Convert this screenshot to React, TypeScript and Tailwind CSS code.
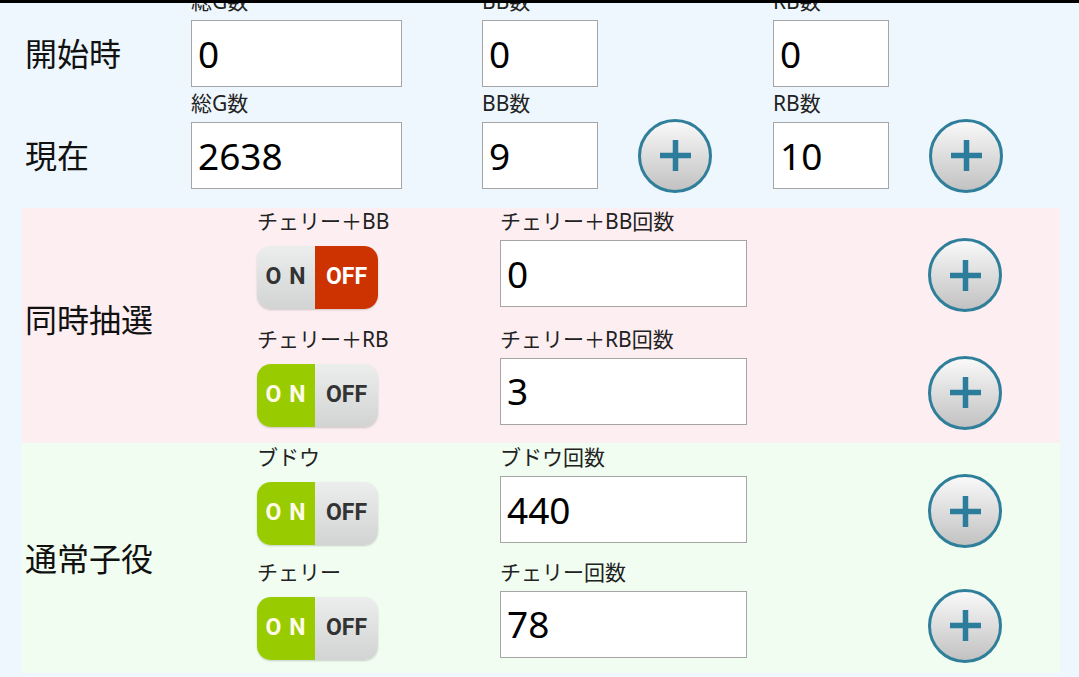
import React from "react";

const font = "font-['Noto_Sans','Noto_Sans_CJK_JP',sans-serif]";

function PlusButton() {
  return (
    <button className="w-[74px] h-[74px] shrink-0 rounded-full border-[3px] border-[#2f7f9b] bg-linear-to-b from-[#f9f9f9] to-[#c2c2c2] flex items-center justify-center">
      <svg width="31" height="31" viewBox="0 0 31 31">
        <path d="M15.5 0v31M0 15.5h31" stroke="#2b7d9b" strokeWidth="5.5" />
      </svg>
    </button>
  );
}

function NumBox({ value, width }: { value: string; width: string }) {
  return (
    <div
      className={`${width} h-[67px] shrink-0 border border-[#a5a5a5] bg-white flex items-center pl-[6px] text-[37px] text-black`}
    >
      {value}
    </div>
  );
}

function TopField({
  label,
  value,
  width,
  plus,
}: {
  label: string;
  value: string;
  width: string;
  plus?: boolean;
}) {
  return (
    <div className="w-[291px] flex flex-col">
      <div className="h-[35px] leading-[32px] text-[21px] text-[#222]">{label}</div>
      <div className="h-[67px] flex items-center">
        <NumBox value={value} width={width} />
        {plus && (
          <div className="ml-[40px]">
            <PlusButton />
          </div>
        )}
      </div>
    </div>
  );
}

function TopRow({ title, values, plus }: { title: string; values: string[]; plus?: boolean }) {
  return (
    <div className="flex">
      <div className="w-[191px] pl-[25px] pt-[35px]">
        <div className="h-[67px] flex items-center text-[32px] text-[#111]">{title}</div>
      </div>
      <TopField label="総G数" value={values[0]} width="w-[211px]" />
      <TopField label="BB数" value={values[1]} width="w-[116px]" plus={plus} />
      <TopField label="RB数" value={values[2]} width="w-[116px]" plus={plus} />
    </div>
  );
}

function Toggle({ on }: { on: boolean }) {
  const gray = "bg-linear-to-b from-[#eceeee] to-[#d2d4d4] text-[#333]";
  return (
    <div className="w-[121px] h-[63px] rounded-[14px] overflow-hidden flex shadow-[0_1px_2px_rgba(0,0,0,0.18)] font-['Roboto',sans-serif] font-bold text-[23px]">
      <div
        className={`w-[58px] flex items-center justify-center tracking-[1px] ${
          on ? "bg-[#99cc00] text-[#fffbe8]" : gray
        }`}
      >
        O N
      </div>
      <div
        className={`flex-1 flex items-center justify-center ${
          on ? gray : "bg-[#cc3300] text-white"
        }`}
      >
        OFF
      </div>
    </div>
  );
}

function ToggleRow({
  name,
  countLabel,
  value,
  on,
}: {
  name: string;
  countLabel: string;
  value: string;
  on: boolean;
}) {
  return (
    <div className="h-[118px] flex">
      <div className="w-[243px]">
        <div className="h-[32px] leading-[26px] text-[21px] text-[#222]">{name}</div>
        <div className="mt-[6px]">
          <Toggle on={on} />
        </div>
      </div>
      <div className="w-[428px]">
        <div className="h-[32px] leading-[26px] text-[21px] text-[#222]">{countLabel}</div>
        <NumBox value={value} width="w-[247px]" />
      </div>
      <div className="pt-[30px]">
        <PlusButton />
      </div>
    </div>
  );
}

export default function App() {
  return (
    <div className={`w-[1079px] h-[677px] overflow-hidden bg-[#eef7fd] ${font}`}>
      <div className="h-[3px] bg-black" />
      <div className="overflow-hidden">
        <div className="-mt-[18px]">
          <TopRow title="開始時" values={["0", "0", "0"]} />
          <TopRow title="現在" values={["2638", "9", "10"]} plus />

          {/* 同時抽選 */}
          <div className="mt-[19px] ml-[22px] w-[1038px] h-[235px] bg-[#fdeef2] flex">
            <div className="w-[235px] pl-[3px] pb-[12px] flex items-center text-[32px] text-[#111]">
              同時抽選
            </div>
            <div className="flex flex-col">
              <ToggleRow name="チェリー＋BB" countLabel="チェリー＋BB回数" value="0" on={false} />
              <ToggleRow name="チェリー＋RB" countLabel="チェリー＋RB回数" value="3" on />
            </div>
          </div>

          {/* 通常子役 */}
          <div className="ml-[22px] w-[1038px] h-[230px] pt-[1px] bg-[#f0fdf0] flex">
            <div className="w-[235px] pl-[3px] flex items-center text-[32px] text-[#111]">
              通常子役
            </div>
            <div className="flex flex-col">
              <ToggleRow name="ブドウ" countLabel="ブドウ回数" value="440" on />
              <ToggleRow name="チェリー" countLabel="チェリー回数" value="78" on />
            </div>
          </div>
        </div>
      </div>
    </div>
  );
}
